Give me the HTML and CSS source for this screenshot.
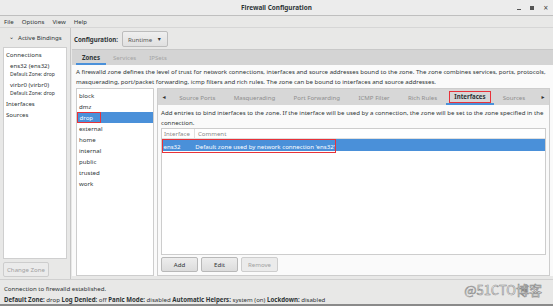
FILE: index.html
```html
<!DOCTYPE html>
<html>
<head>
<meta charset="utf-8">
<link rel="stylesheet" href="styles.css">
</head>
<body>
<div class="window">
  <div class="titlebar">
    <span class="title">Firewall Configuration</span>
    <div class="wctl">
      <span class="wmin"></span>
      <span class="wmax"></span>
      <span class="wclose">×</span>
    </div>
  </div>
  <div class="menubar">
    <span>File</span><span>Options</span><span>View</span><span>Help</span>
  </div>
  <div class="main">
    <div class="sidebar">
      <div class="bind-head"><span class="chev">⌄</span>Active Bindings</div>
      <div class="bind-box">
        <div class="bh">Connections</div>
        <div class="conn">ens32 (ens32)</div>
        <div class="connsub">Default Zone: drop</div>
        <div class="conn">virbr0 (virbr0)</div>
        <div class="connsub">Default Zone: drop</div>
        <div class="bh">Interfaces</div>
        <div class="bh">Sources</div>
      </div>
      <div class="btn disabled chz">Change Zone</div>
    </div>
    <div class="content">
      <div class="confrow">
        <span class="conflabel">Configuration:</span>
        <div class="combo"><span>Runtime</span><span class="caret">▾</span></div>
      </div>
      <div class="tabs outer">
        <span class="tab active">Zones</span>
        <span class="tab dim">Services</span>
        <span class="tab dim">IPSets</span>
      </div>
      <div class="page">
        <p class="desc">A firewalld zone defines the level of trust for network connections, interfaces and source addresses bound to the zone. The zone combines services, ports, protocols, masquerading, port/packet forwarding, icmp filters and rich rules. The zone can be bound to interfaces and source addresses.</p>
        <div class="zonearea">
          <div class="zonelist">
            <div class="zi">block</div>
            <div class="zi">dmz</div>
            <div class="zi sel"><div class="redbox">drop</div></div>
            <div class="zi">external</div>
            <div class="zi">home</div>
            <div class="zi">internal</div>
            <div class="zi">public</div>
            <div class="zi">trusted</div>
            <div class="zi">work</div>
          </div>
          <div class="inner">
            <div class="tabs innertabs">
              <span class="arrow">◂</span>
              <span class="itab">Source Ports</span>
              <span class="itab">Masquerading</span>
              <span class="itab">Port Forwarding</span>
              <span class="itab">ICMP Filter</span>
              <span class="itab">Rich Rules</span>
              <span class="itab iactive"><span class="redtab">Interfaces</span></span>
              <span class="itab">Sources</span>
              <span class="arrow right">▸</span>
            </div>
            <div class="ipage">
              <p class="idesc">Add entries to bind interfaces to the zone. If the interface will be used by a connection, the zone will be set to the zone specified in the connection.</p>
              <div class="table">
                <div class="thead"><span class="c1">Interface</span><span class="c2">Comment</span></div>
                <div class="trow sel">
                  <div class="rowbox"><span class="c1">ens32</span><span class="c2">Default zone used by network connection 'ens32'</span></div>
                </div>
              </div>
              <div class="btnrow">
                <div class="btn">Add</div>
                <div class="btn">Edit</div>
                <div class="btn disabled">Remove</div>
              </div>
            </div>
          </div>
        </div>
      </div>
    </div>
  </div>
  <div class="status">
    <div class="sline">Connection to firewalld established.</div>
    <div class="sline"><b>Default Zone:</b> drop <b>Log Denied:</b> off <b>Panic Mode:</b> disabled <b>Automatic Helpers:</b> system (on) <b>Lockdown:</b> disabled</div>
    <div class="watermark">@51CTO博客</div>
  </div>
</div>
</body>
</html>
```
FILE: styles.css
```css
* { box-sizing: border-box; }
html, body { margin: 0; padding: 0; }
body {
  width: 553px; height: 306px; overflow: hidden;
  font-family: "Noto Sans", "DejaVu Sans", sans-serif;
  font-size: 6.1px; color: #2e3436; background: #e8e8e7; white-space: nowrap;
}
p { white-space: normal; }
.window { width: 553px; height: 306px; display: flex; flex-direction: column; border-bottom: 2px solid #8a8a8a; }
.titlebar {
  height: 16px; flex: none; position: relative; display: flex; align-items: center; justify-content: center;
  background: #ececec; border-bottom: 1px solid #bfbfbf;
}
.title { font-weight: bold; font-size: 6.4px; color: #2e3436; }
.wctl { position: absolute; right: 5px; top: 0; height: 15px; display: flex; align-items: center; gap: 9px; }
.wmin { width: 4px; height: 1px; background: #555; margin-top: 3px; }
.wmax { width: 4px; height: 4px; background: #555; }
.wclose { font-size: 8px; color: #444; line-height: 1; }
.menubar { height: 12px; flex: none; display: flex; align-items: center; gap: 8px; padding-left: 4px; border-bottom: 1px solid #d6d6d6; background: #e8e8e7; }
.main { flex: 1; display: flex; min-height: 0; }
.sidebar { width: 71px; flex: none; border-right: 1px solid #c6c6c6; padding: 0 3px 2px 3px; display: flex; flex-direction: column; }
.bind-head { height: 19px; display: flex; align-items: center; padding-left: 6px; gap: 4px; }
.chev { font-size: 6px; position: relative; top: -1px; }
.bind-box { flex: 1; background: #fff; border: 1px solid #cfcfcf; padding: 1px 2px; }
.bh { height: 11px; line-height: 11px; }
.conn { padding-left: 4px; height: 9px; line-height: 10px; margin-top: 1px; }
.connsub { padding-left: 4px; font-size: 5.1px; height: 9px; line-height: 8px; }
.btn {
  height: 15px; display: flex; align-items: center; justify-content: center;
  border: 1px solid #b8b8b8; border-radius: 2px; background: linear-gradient(#ededed, #dcdcdc); color: #2e3436;
}
.btn.disabled { color: #a0a0a0; background: #ebebeb; border-color: #cdcdcd; }
.chz { width: 46px; margin-top: 3px; }
.content { flex: 1; display: flex; flex-direction: column; padding: 2px 0 3px 1px; }
.confrow { height: 18px; display: flex; align-items: center; gap: 4px; padding-left: 2px; }
.conflabel { font-weight: bold; }
.combo {
  width: 46px; height: 16px; display: flex; align-items: center; justify-content: space-between; padding: 0 6px 0 5px;
  border: 1px solid #bcbcbc; border-radius: 2px; background: linear-gradient(#efefef, #e0e0e0); color: #555;
}
.caret { font-size: 6px; color: #333; }
.tabs.outer { height: 16px; margin-top: 1px; background: #d4d4d4; display: flex; align-items: stretch; padding-left: 4px; border-top: 1px solid #c8c8c8; }
.tab { display: flex; align-items: center; padding: 0 6px; margin-right: 1px; color: #2e3436; }
.tab.active { font-weight: bold; border-bottom: 2px solid #4a90d9; padding: 2px 6px 0; }
.tab.dim { color: #a4a4a4; }
.page { flex: 1; background: #fafafa; display: flex; flex-direction: column; padding: 2px 3px 0 4px; }
.desc { margin: 0; line-height: 10px; height: 21px; padding-top: 0; }
.zonearea { flex: 1; display: flex; gap: 3px; }
.zonelist { width: 78px; background: #fff; border: 1px solid #cdcdcd; padding-top: 1px; }
.zi { height: 11px; line-height: 11px; padding-left: 2px; }
.zi.sel { background: #4a90d9; color: #fff; padding-left: 0; }
.redbox { width: 24px; height: 11px; line-height: 9px; border: 1.5px solid #e8323a; padding-left: 1.5px; }
.inner { flex: 1; border: 1px solid #cdcdcd; display: flex; flex-direction: column; background: #fafafa; }
.innertabs { height: 16px; background: #d7d7d7; display: flex; align-items: stretch; }
.arrow { width: 12px; display: flex; align-items: center; justify-content: center; font-size: 6px; color: #333; }
.arrow.right { margin-left: auto; }
.itab { display: flex; align-items: center; padding: 0 9.2px; color: #8e8e8e; }
.itab.iactive { color: #2e3436; font-weight: bold; border-bottom: 2px solid #4a90d9; padding: 2px 3px 0; }
.redtab { border: 1.5px solid #e8323a; padding: 1px 4px; line-height: 8px; }
.ipage { flex: 1; display: flex; flex-direction: column; padding: 3px 3px 3px 3px; }
.idesc { margin: 0; line-height: 9.5px; height: 20px; }
.table { flex: 1; background: #fff; border: 1px solid #cdcdcd; }
.thead { height: 10px; display: flex; align-items: center; color: #888; border-bottom: 1px solid #e0e0e0; }
.thead .c1 { width: 33px; padding-left: 2px; border-right: 1px solid #e0e0e0; }
.thead .c2 { padding-left: 3px; }
.trow.sel { height: 12px; background: #4a90d9; color: #fff; display: flex; align-items: center; }
.rowbox { width: 174px; height: 14px; margin-top: 2px; border: 1.5px solid #e8323a; display: flex; align-items: center; }
.rowbox .c1 { width: 32px; padding-left: 0.5px; }
.rowbox .c2 { padding-left: 2px; }
.btnrow { display: flex; gap: 3px; margin-top: 2px; }
.btnrow .btn { width: 37px; }
.status { height: 25px; flex: none; border-top: 1px solid #d0d0d0; position: relative; padding: 3px 4px 0; }
.sline { height: 11px; line-height: 11px; }
.sline b { font-weight: bold; }
.watermark {
  position: absolute; right: 11px; top: 0px; font-family: "Noto Sans CJK SC", sans-serif;
  font-size: 13px; color: #ffffff; -webkit-text-stroke: 0.6px #8a8a8a; letter-spacing: 0;
}
```
